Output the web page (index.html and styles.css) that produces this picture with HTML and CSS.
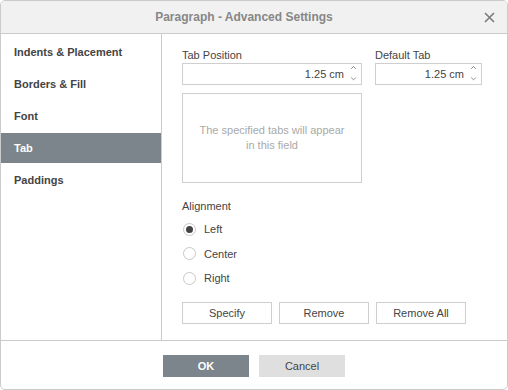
FILE: index.html
```html
<!DOCTYPE html>
<html>
<head>
<meta charset="utf-8">
<link rel="stylesheet" href="styles.css">
</head>
<body>
<div class="dialog">
  <div class="header">
    <span class="title">Paragraph - Advanced Settings</span>
    <span class="close"><svg width="11" height="11" viewBox="0 0 11 11"><path d="M1 1L10 10M10 1L1 10" stroke="#7b7b7b" stroke-width="1.6" fill="none"/></svg></span>
  </div>
  <div class="body">
    <div class="sidebar">
      <div class="nav-item">Indents &amp; Placement</div>
      <div class="nav-item">Borders &amp; Fill</div>
      <div class="nav-item">Font</div>
      <div class="nav-item active">Tab</div>
      <div class="nav-item">Paddings</div>
    </div>
    <div class="content">
      <div class="row">
        <div class="col col-pos">
          <div class="label">Tab Position</div>
          <div class="spin">
            <span class="val">1.25 cm</span>
            <span class="arrows">
              <svg width="7" height="18" viewBox="0 0 7 18"><path d="M1.2 3.8L3.5 1.5L5.8 3.8M1.2 12.5L3.5 14.8L5.8 12.5" stroke="#808080" stroke-width="0.9" fill="none"/></svg>
            </span>
          </div>
          <div class="tablist">
            <span>The specified tabs will appear<br>in this field</span>
          </div>
        </div>
        <div class="col col-def">
          <div class="label">Default Tab</div>
          <div class="spin">
            <span class="val">1.25 cm</span>
            <span class="arrows">
              <svg width="7" height="18" viewBox="0 0 7 18"><path d="M1.2 3.8L3.5 1.5L5.8 3.8M1.2 12.5L3.5 14.8L5.8 12.5" stroke="#808080" stroke-width="0.9" fill="none"/></svg>
            </span>
          </div>
        </div>
      </div>
      <div class="label align-label">Alignment</div>
      <div class="radios">
        <div class="radio"><span class="circle checked"></span>Left</div>
        <div class="radio"><span class="circle"></span>Center</div>
        <div class="radio"><span class="circle"></span>Right</div>
      </div>
      <div class="actions">
        <div class="btn">Specify</div>
        <div class="btn">Remove</div>
        <div class="btn">Remove All</div>
      </div>
    </div>
  </div>
  <div class="footer">
    <div class="fbtn ok">OK</div>
    <div class="fbtn cancel">Cancel</div>
  </div>
</div>
</body>
</html>
```

FILE: styles.css
```css
* { box-sizing: border-box; }
html, body { margin: 0; padding: 0; background: #fff; }
body {
  font-family: "Liberation Sans", Arial, sans-serif;
  font-size: 11px;
  color: #444;
}
.dialog {
  width: 508px;
  height: 390px;
  border: 1px solid #cbcbcb;
  border-radius: 5px;
  overflow: hidden;
  display: flex;
  flex-direction: column;
  background: #fff;
}
.header {
  height: 33px;
  flex: none;
  background: #f1f1f1;
  border-bottom: 1px solid #cbcbcb;
  display: flex;
  align-items: center;
  justify-content: center;
  padding-right: 20px;
  position: relative;
}
.title {
  font-weight: bold;
  font-size: 12px;
  color: #878787;
}
.close {
  position: absolute;
  right: 12px;
  top: 11px;
  width: 11px;
  height: 11px;
  display: flex;
}
.body {
  flex: 1;
  display: flex;
  min-height: 0;
}
.sidebar {
  width: 161px;
  flex: none;
  border-right: 1px solid #cbcbcb;
  padding-top: 3px;
}
.nav-item {
  height: 30px;
  margin-bottom: 2px;
  padding-left: 13px;
  display: flex;
  align-items: center;
  font-weight: bold;
  color: #444;
}
.nav-item.active {
  background: #7d858c;
  color: #fff;
}
.content {
  flex: 1;
  padding: 15px 20px 0 20px;
}
.row {
  display: flex;
  gap: 13px;
}
.col-pos { width: 180px; }
.col-def { width: 107px; }
.label {
  line-height: 13px;
  height: 13px;
  color: #444;
}
.spin {
  margin-top: 1px;
  height: 22px;
  border: 1px solid #cfcfcf;
  display: flex;
  align-items: center;
  justify-content: flex-end;
}
.val { color: #444; }
.arrows {
  width: 16px;
  margin-left: 1px;
  display: flex;
  justify-content: center;
  align-items: center;
}
.arrows svg { display: block; }
.tablist {
  margin-top: 8px;
  height: 90px;
  border: 1px solid #cfcfcf;
  display: flex;
  align-items: center;
  justify-content: center;
  text-align: center;
  color: #a9a9a9;
  line-height: 15px;
}
.align-label { margin-top: 17px; }
.radio {
  height: 16px;
  margin-top: 8px;
  display: flex;
  align-items: center;
  gap: 8px;
}
.radio + .radio { margin-top: 8.5px; }
.circle {
  width: 13px;
  height: 13px;
  border-radius: 50%;
  border: 1px solid #c8c8c8;
  display: flex;
  align-items: center;
  justify-content: center;
  margin-left: 1px;
}
.circle.checked::after {
  content: "";
  width: 7px;
  height: 7px;
  border-radius: 50%;
  background: #444;
}
.actions {
  margin-top: 16px;
  display: flex;
  gap: 7px;
}
.btn {
  width: 90px;
  height: 22px;
  border: 1px solid #cfcfcf;
  display: flex;
  align-items: center;
  justify-content: center;
  color: #444;
}
.footer {
  height: 49px;
  flex: none;
  border-top: 1px solid #cbcbcb;
  display: flex;
  justify-content: center;
  gap: 10px;
  padding-top: 14px;
}
.fbtn {
  width: 86px;
  height: 22px;
  display: flex;
  align-items: center;
  justify-content: center;
}
.ok {
  background: #7d858c;
  color: #fff;
  font-weight: bold;
}
.cancel {
  background: #dfdfdf;
  color: #444;
}
```
